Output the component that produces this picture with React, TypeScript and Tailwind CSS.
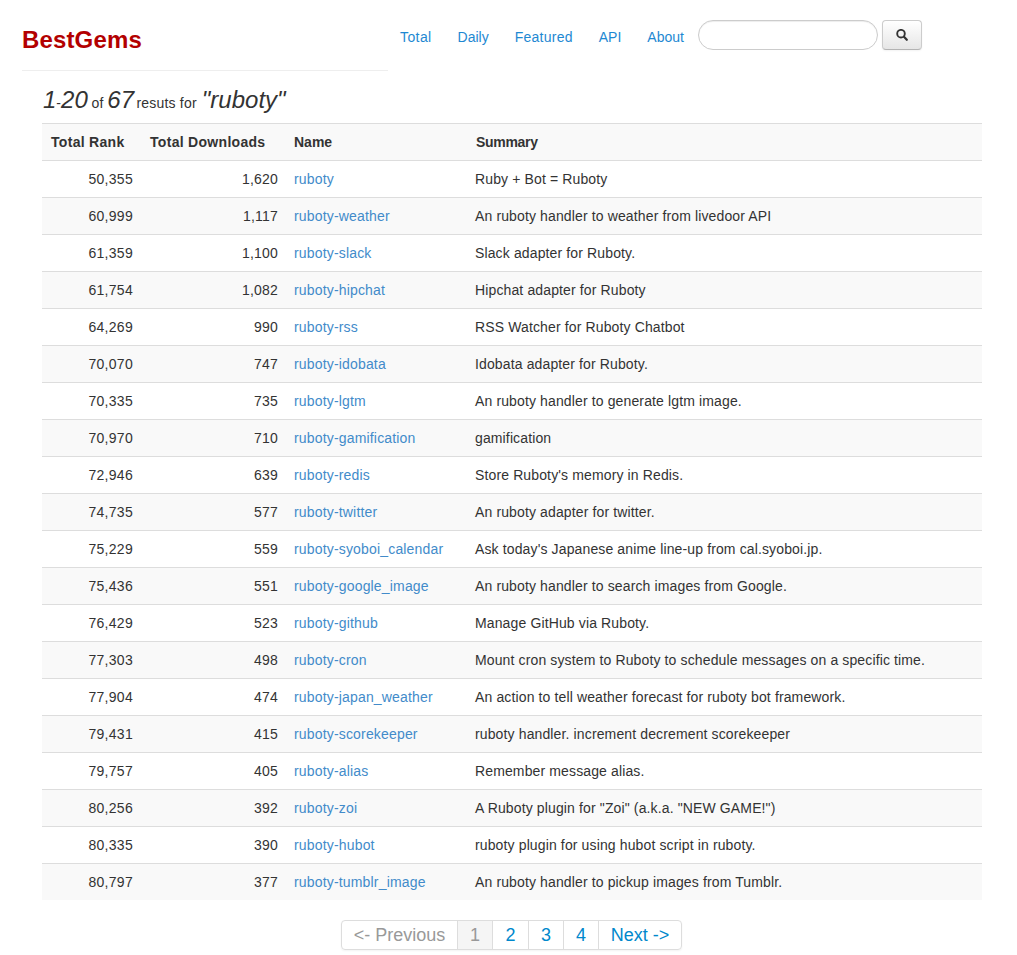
import React from "react";

const rows: [string, string, string, string][] = [
  ["50,355", "1,620", "ruboty", "Ruby + Bot = Ruboty"],
  ["60,999", "1,117", "ruboty-weather", "An ruboty handler to weather from livedoor API"],
  ["61,359", "1,100", "ruboty-slack", "Slack adapter for Ruboty."],
  ["61,754", "1,082", "ruboty-hipchat", "Hipchat adapter for Ruboty"],
  ["64,269", "990", "ruboty-rss", "RSS Watcher for Ruboty Chatbot"],
  ["70,070", "747", "ruboty-idobata", "Idobata adapter for Ruboty."],
  ["70,335", "735", "ruboty-lgtm", "An ruboty handler to generate lgtm image."],
  ["70,970", "710", "ruboty-gamification", "gamification"],
  ["72,946", "639", "ruboty-redis", "Store Ruboty's memory in Redis."],
  ["74,735", "577", "ruboty-twitter", "An ruboty adapter for twitter."],
  ["75,229", "559", "ruboty-syoboi_calendar", "Ask today's Japanese anime line-up from cal.syoboi.jp."],
  ["75,436", "551", "ruboty-google_image", "An ruboty handler to search images from Google."],
  ["76,429", "523", "ruboty-github", "Manage GitHub via Ruboty."],
  ["77,303", "498", "ruboty-cron", "Mount cron system to Ruboty to schedule messages on a specific time."],
  ["77,904", "474", "ruboty-japan_weather", "An action to tell weather forecast for ruboty bot framework."],
  ["79,431", "415", "ruboty-scorekeeper", "ruboty handler. increment decrement scorekeeper"],
  ["79,757", "405", "ruboty-alias", "Remember message alias."],
  ["80,256", "392", "ruboty-zoi", 'A Ruboty plugin for "Zoi" (a.k.a. "NEW GAME!")'],
  ["80,335", "390", "ruboty-hubot", "ruboty plugin for using hubot script in ruboty."],
  ["80,797", "377", "ruboty-tumblr_image", "An ruboty handler to pickup images from Tumblr."],
];

export default function App() {
  return (
    <div className="w-[1017px] h-[955px] overflow-hidden bg-white text-[14px] leading-[20px] text-[#333] font-['Liberation_Sans',Arial,sans-serif]">
      <header className="flex h-[71px]">
        <div className="ml-[22px] w-[366px] h-[71px] border-b border-[#eee]">
          <div className="pt-[25px] text-[24px] leading-[30px] font-bold tracking-[0.15px] text-[#b30000]">BestGems</div>
        </div>
        <nav className="flex items-start pt-[20px] ml-[12px]">
          <a className="mt-[7px] tracking-[0.4px] text-[#1e88d2]">Total</a>
          <a className="mt-[7px] ml-[26px] text-[#1e88d2]">Daily</a>
          <a className="mt-[7px] ml-[26px] tracking-[0.25px] text-[#1e88d2]">Featured</a>
          <a className="mt-[7px] ml-[26px] text-[#1e88d2]">API</a>
          <a className="mt-[7px] ml-[26px] text-[#1e88d2]">About</a>
          <div className="ml-[14px] w-[180px] h-[30px] rounded-[15px] border border-[#ccc] bg-white shadow-[inset_0_1px_1px_rgba(0,0,0,0.075)]" />
          <button className="ml-[4px] w-[40px] h-[30px] flex items-center justify-center rounded-[4px] border border-[#ccc] border-b-[#b3b3b3] bg-gradient-to-b from-white to-[#e6e6e6] shadow-[0_1px_2px_rgba(0,0,0,0.05)]">
            <svg width="12" height="12" viewBox="0 0 12 12" fill="none">
              <circle cx="5" cy="4.7" r="3.8" stroke="#333" strokeWidth="1.9" />
              <path d="M8 7.7 L10.8 10.8" stroke="#333" strokeWidth="2.2" strokeLinecap="round" />
            </svg>
          </button>
        </nav>
      </header>

      <main className="ml-[42px] w-[940px]">
        <h1 className="h-[52px] pt-[14px] pl-[1px] font-normal italic text-[24px] leading-[30px] whitespace-pre">
          <span>1</span><span className="text-[14px] not-italic">-</span><span>20</span>
          <span className="text-[14px] not-italic"> of </span>
          <span className="tracking-[0.2px]">67</span>
          <span className="ml-[-2px] text-[14px] not-italic tracking-[0.2px]"> resuts for </span>
          <span className="ml-[1px]">"ruboty"</span>
        </h1>
        <table className="w-[940px] table-fixed border-separate border-spacing-0">
          <colgroup>
            <col className="w-[99px]" />
            <col className="w-[145px]" />
            <col className="w-[181px]" />
            <col />
          </colgroup>
          <thead>
            <tr className="bg-[#f9f9f9]">
              <th className="h-[37px] pl-[9px] border-t border-[#ddd] text-left font-bold tracking-[0.3px] whitespace-nowrap">Total Rank</th>
              <th className="h-[37px] pl-[9px] border-t border-[#ddd] text-left font-bold tracking-[0.3px] whitespace-nowrap">Total Downloads</th>
              <th className="h-[37px] px-[8px] border-t border-[#ddd] text-left font-bold">Name</th>
              <th className="h-[37px] pl-[9px] border-t border-[#ddd] text-left font-bold tracking-[-0.3px]">Summary</th>
            </tr>
          </thead>
          <tbody>
            {rows.map((r, i) => (
              <tr key={r[2]} className={i % 2 === 1 ? "bg-[#f9f9f9]" : "bg-white"}>
                <td className="h-[37px] px-[8px] border-t border-[#ddd] text-right tracking-[0.3px]">{r[0]}</td>
                <td className="h-[37px] px-[8px] border-t border-[#ddd] text-right tracking-[0.2px]">{r[1]}</td>
                <td className="h-[37px] px-[8px] border-t border-[#ddd] whitespace-nowrap tracking-[0.17px] text-[#428bca]">{r[2]}</td>
                <td className="h-[37px] px-[8px] border-t border-[#ddd] whitespace-nowrap tracking-[0.13px]">{r[3]}</td>
              </tr>
            ))}
          </tbody>
        </table>
        <div className="flex justify-center mt-[20px]">
          <div className="mr-[1px] flex h-[30px] text-[18px] leading-[28px] text-center border border-[#ddd] rounded-[4px] shadow-[0_1px_2px_rgba(0,0,0,0.05)] overflow-hidden">
            <span className="w-[115px] text-[#999]">&lt;- Previous</span>
            <span className="w-[35px] text-[#999] bg-[#f5f5f5] border-l border-[#ddd]">1</span>
            <span className="w-[36px] text-[#0088cc] border-l border-[#ddd]">2</span>
            <span className="w-[35px] text-[#0088cc] border-l border-[#ddd]">3</span>
            <span className="w-[35px] text-[#0088cc] border-l border-[#ddd]">4</span>
            <span className="w-[83px] text-[#0088cc] border-l border-[#ddd]">Next -&gt;</span>
          </div>
        </div>
      </main>
    </div>
  );
}
